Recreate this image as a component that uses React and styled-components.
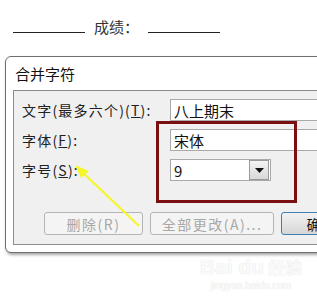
import React from "react";
import styled, { createGlobalStyle } from "styled-components";

const GlobalStyle = createGlobalStyle`
  html, body {
    margin: 0;
    padding: 0;
    background: #ffffff;
    overflow: hidden;
  }
  body {
    font-family: "Noto Sans CJK SC", "Liberation Sans", sans-serif;
  }
`;

const Page = styled.div`
  position: relative;
  width: 317px;
  height: 305px;
  overflow: hidden;
`;

const Header = styled.div`
  display: flex;
  align-items: flex-end;
  gap: 9px;
  height: 34px;
  padding-left: 13px;
  font-size: 15px;
  color: #333;
`;

const Blank = styled.span`
  display: block;
  width: 72px;
  height: 1px;
  margin-bottom: 1px;
  background: #222;
`;

const Score = styled.span`
  line-height: 18px;
  margin-bottom: -2px;
`;

const Dialog = styled.div`
  margin: 22px 0 0 5px;
  width: 345px;
  border: 1px solid #6f6f6f;
  border-radius: 6px;
  background: #fff;
  box-shadow: 1px 2px 3px rgba(0, 0, 0, 0.35);
  padding: 0 0 7px 7px;
`;

const Title = styled.div`
  height: 33px;
  display: flex;
  align-items: center;
  padding-left: 2px;
  font-size: 15px;
  color: #111;
`;

const Panel = styled.div`
  background: #f0f0f0;
  border: 1px solid #8c8c8c;
  padding: 8px 0 9px 8px;
`;

const Form = styled.div`
  display: grid;
  grid-template-columns: 148px 1fr;
  row-gap: 8px;
  align-items: center;
`;

const Label = styled.label`
  font-size: 14px;
  color: #222;
  letter-spacing: 1.2px;
  white-space: nowrap;
  u {
    text-decoration: underline;
  }
`;

const Field = styled.div`
  height: 20px;
  width: ${(p) => p.$width || "200px"};
  border: 1px solid #a9a9a9;
  background: #fff;
  display: flex;
  align-items: center;
  padding-left: 3px;
  font-size: 15px;
  color: #111;
  box-sizing: content-box;
`;

const ComboValue = styled.span`
  flex: 1;
`;

const DropButton = styled.span`
  width: 18px;
  height: 18px;
  margin-right: 1px;
  border: 1px solid #9a9a9a;
  background: linear-gradient(#f4f4f4, #d8d8d8);
  display: flex;
  align-items: center;
  justify-content: center;
`;

const Buttons = styled.div`
  display: flex;
  gap: 7px;
  margin: 31px 0 0 22px;
`;

const Button = styled.div`
  height: 21px;
  width: ${(p) => p.$width};
  flex: none;
  border: 1px solid ${(p) => (p.$primary ? "#3c7fb1" : "#b5b5b5")};
  border-radius: 3px;
  background: ${(p) =>
    p.$primary ? "linear-gradient(#f2f2f2, #d6d6d6)" : "#f4f4f4"};
  color: ${(p) => (p.$primary ? "#111" : "#a8a8a8")};
  font-size: 14px;
  letter-spacing: 1.5px;
  display: flex;
  align-items: center;
  justify-content: center;
  white-space: nowrap;
`;

const RedBox = styled.div`
  position: absolute;
  left: 156px;
  top: 121px;
  width: 135px;
  height: 76px;
  border: 3px solid #7a0f12;
`;

const Arrow = styled.svg`
  position: absolute;
  left: 0;
  top: 0;
  pointer-events: none;
`;

const Watermark = styled.div`
  position: absolute;
  left: 200px;
  top: 254px;
  display: flex;
  flex-direction: column;
  align-items: center;
  color: #fafafa;
  text-shadow: 0 0 1px #d8d8d8;
`;

const MarkLogo = styled.div`
  font-family: "Liberation Sans", sans-serif;
  font-weight: bold;
  font-size: 21px;
  line-height: 26px;
  span {
    font-family: "Noto Sans CJK SC", sans-serif;
    font-size: 17px;
    margin-left: 4px;
  }
`;

const MarkUrl = styled.div`
  font-family: "Liberation Sans", sans-serif;
  font-size: 10px;
  line-height: 12px;
`;

export default function App() {
  return (
    <Page>
      <GlobalStyle />
      <Header>
        <Blank />
        <Score>成绩：</Score>
        <Blank />
      </Header>
      <Dialog>
        <Title>合并字符</Title>
        <Panel>
          <Form>
            <Label>
              文字(最多六个)(<u>T</u>):
            </Label>
            <Field $width="200px">八上期末</Field>
            <Label>
              字体(<u>F</u>):
            </Label>
            <Field $width="200px">宋体</Field>
            <Label>
              字号(<u>S</u>):
            </Label>
            <Field $width="96px">
              <ComboValue>9</ComboValue>
              <DropButton>
                <svg width="9" height="5" viewBox="0 0 9 5">
                  <path d="M0 0h9L4.5 5z" fill="#111" />
                </svg>
              </DropButton>
            </Field>
          </Form>
          <Buttons>
            <Button $width="97px">删除(R)</Button>
            <Button $width="122px">全部更改(A)...</Button>
            <Button $width="80px" $primary>
              确定
            </Button>
          </Buttons>
        </Panel>
      </Dialog>
      <RedBox />
      <Arrow width="317" height="305" viewBox="0 0 317 305">
        <line x1="139" y1="226" x2="80" y2="170" stroke="#f6f62a" strokeWidth="2.2" />
        <path d="M75 165 L89 171 L81 178 Z" fill="#f6f62a" />
      </Arrow>
      <Watermark>
        <MarkLogo>
          Bai du<span>经验</span>
        </MarkLogo>
        <MarkUrl>jingyan.baidu.com</MarkUrl>
      </Watermark>
    </Page>
  );
}
